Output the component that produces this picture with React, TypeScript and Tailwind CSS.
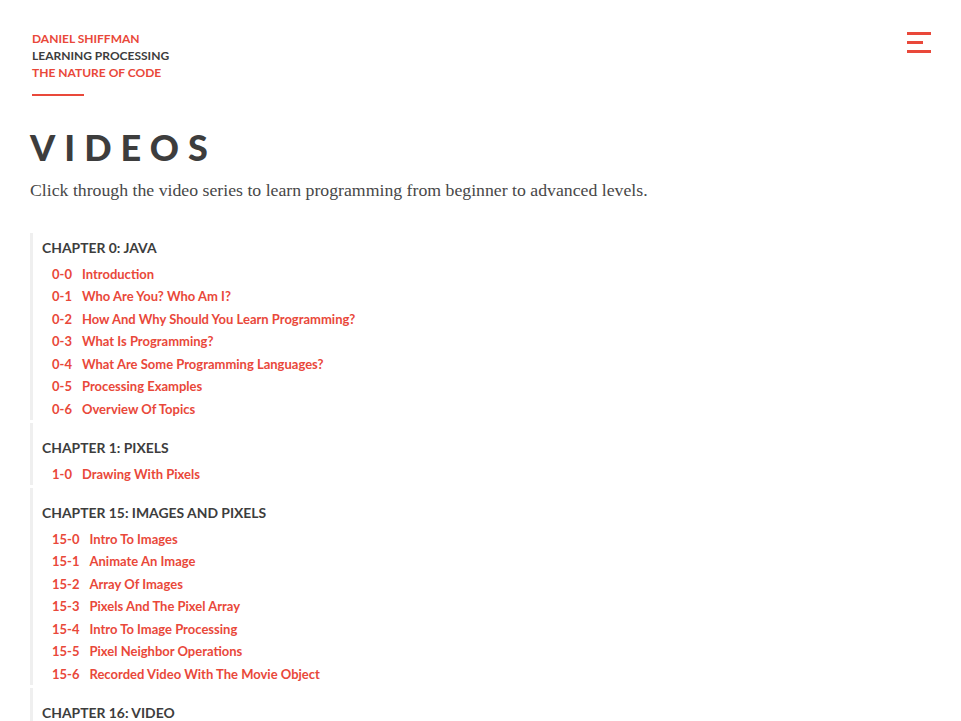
import React from 'react';

type Video = {
  num: string;
  title: string;
};

type Chapter = {
  title: string;
  videos: Video[];
};

const chapters: Chapter[] = [
  {
    title: 'Chapter 0: Java',
    videos: [
      { num: '0-0', title: 'Introduction' },
      { num: '0-1', title: 'Who Are You? Who Am I?' },
      { num: '0-2', title: 'How And Why Should You Learn Programming?' },
      { num: '0-3', title: 'What Is Programming?' },
      { num: '0-4', title: 'What Are Some Programming Languages?' },
      { num: '0-5', title: 'Processing Examples' },
      { num: '0-6', title: 'Overview Of Topics' },
    ],
  },
  {
    title: 'Chapter 1: Pixels',
    videos: [{ num: '1-0', title: 'Drawing With Pixels' }],
  },
  {
    title: 'Chapter 15: Images and Pixels',
    videos: [
      { num: '15-0', title: 'Intro To Images' },
      { num: '15-1', title: 'Animate An Image' },
      { num: '15-2', title: 'Array Of Images' },
      { num: '15-3', title: 'Pixels And The Pixel Array' },
      { num: '15-4', title: 'Intro To Image Processing' },
      { num: '15-5', title: 'Pixel Neighbor Operations' },
      { num: '15-6', title: 'Recorded Video With The Movie Object' },
    ],
  },
  {
    title: 'Chapter 16: Video',
    videos: [
      { num: '16-0', title: 'Live Video' },
      { num: '16-1', title: 'Recorded Video' },
    ],
  },
];

const Header = () => {
  return (
    <header className="flex justify-between">
      <div className="pl-[2px]">
        <nav className="flex flex-col text-[12px] leading-[17px] font-bold uppercase pt-[30px]">
          <a href="#" className="text-[#e9483a]">Daniel Shiffman</a>
          <a href="#" className="text-[#3d3d3d]">Learning Processing</a>
          <a href="#" className="text-[#e9483a]">The Nature of Code</a>
        </nav>
        <div className="mt-[13px] w-[52px] h-[2px] bg-[#e9483a]" />
      </div>
      <button className="mt-[32px] mr-[30px] flex flex-col items-start gap-[6px]" aria-label="Menu">
        <span className="block w-[24px] h-[3px] bg-[#e9483a]" />
        <span className="block w-[16px] h-[3px] bg-[#e9483a]" />
        <span className="block w-[24px] h-[3px] bg-[#e9483a]" />
      </button>
    </header>
  );
};

const ChapterList = ({ chapter, first }: { chapter: Chapter; first: boolean }) => {
  return (
    <section className={`border-l-[3px] border-[#efefef] pl-[9px] mb-[3px] ${first ? 'pt-[4.5px]' : 'pt-[14.5px]'}`}>
      <h2 className="text-[13.9px] leading-5 font-bold uppercase text-[#3d3d3d] mb-[5px]">{chapter.title}</h2>
      <ul className="pl-[10px]">
        {chapter.videos.map((video) => (
          <li key={video.num} className="text-[13px] leading-[22.5px] font-bold text-[#e9483a]">
            <a href="#">
              <span className="mr-[10px]">{video.num}</span>
              {video.title}
            </a>
          </li>
        ))}
      </ul>
    </section>
  );
};

export default function App() {
  return (
    <div className="h-[721px] overflow-hidden bg-white pl-[30px] font-['Lato',sans-serif]">
      <Header />
      <h1 className="mt-[29px] text-[36px] leading-[44px] font-black tracking-[0.25em] text-[#3d3d3d] uppercase">
        Videos
      </h1>
      <p className="mt-[9px] font-['Liberation_Serif',serif] text-[17.75px] leading-6 text-[#474747]">
        Click through the video series to learn programming from beginner to advanced levels.
      </p>
      <div className="mt-[31px]">
        {chapters.map((chapter, i) => (
          <ChapterList key={chapter.title} chapter={chapter} first={i === 0} />
        ))}
      </div>
    </div>
  );
}
